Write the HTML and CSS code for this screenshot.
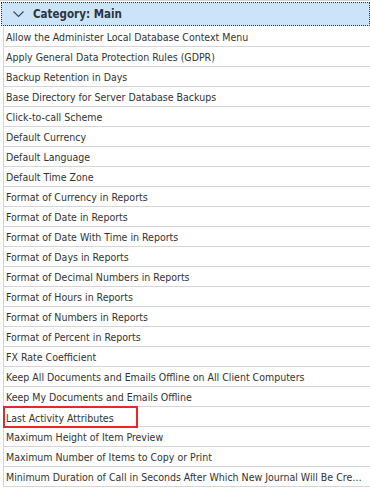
FILE: index.html
```html
<!DOCTYPE html>
<html>
<head>
<meta charset="utf-8">
<link rel="stylesheet" href="styles.css">
</head>
<body>
<div class="grid">
  <div class="cat">
    <div class="cat-inner">
      <svg class="chev" width="11" height="7" viewBox="0 0 11 7"><path d="M0.5 0.5 L5.5 5.5 L10.5 0.5" fill="none" stroke="#3b4a5a" stroke-width="1.2"/></svg>
      <span class="cat-label">Category: Main</span>
    </div>
  </div>
  <div class="rows">
    <div class="row">Allow the Administer Local Database Context Menu</div>
    <div class="row">Apply General Data Protection Rules (GDPR)</div>
    <div class="row">Backup Retention in Days</div>
    <div class="row">Base Directory for Server Database Backups</div>
    <div class="row">Click-to-call Scheme</div>
    <div class="row">Default Currency</div>
    <div class="row">Default Language</div>
    <div class="row">Default Time Zone</div>
    <div class="row">Format of Currency in Reports</div>
    <div class="row">Format of Date in Reports</div>
    <div class="row">Format of Date With Time in Reports</div>
    <div class="row">Format of Days in Reports</div>
    <div class="row">Format of Decimal Numbers in Reports</div>
    <div class="row">Format of Hours in Reports</div>
    <div class="row">Format of Numbers in Reports</div>
    <div class="row">Format of Percent in Reports</div>
    <div class="row">FX Rate Coefficient</div>
    <div class="row">Keep All Documents and Emails Offline on All Client Computers</div>
    <div class="row">Keep My Documents and Emails Offline</div>
    <div class="row highlight"><span class="mark">Last Activity Attributes</span></div>
    <div class="row">Maximum Height of Item Preview</div>
    <div class="row">Maximum Number of Items to Copy or Print</div>
    <div class="row">Minimum Duration of Call in Seconds After Which New Journal Will Be Created Automatically</div>
  </div>
</div>
</body>
</html>
```

FILE: styles.css
```css
html, body {
  margin: 0;
  padding: 0;
  background: #ffffff;
}
body {
  font-family: "DejaVu Sans Condensed", "DejaVu Sans", sans-serif;
  font-size: 10.5px;
  color: #333333;
  width: 370px;
  height: 490px;
  overflow: hidden;
}
.grid {
  display: flex;
  flex-direction: column;
}
.cat {
  height: 27px;
  box-sizing: border-box;
  border-top: 1px solid #d4d4d4;
  padding: 1px 0 1px 1px;
  background: #ffffff;
}
.cat-inner {
  height: 24px;
  box-sizing: border-box;
  background: #cce4f7;
  border: 1px dotted #333333;
  display: flex;
  align-items: center;
  padding-left: 11px;
  gap: 9px;
}
.chev {
  display: block;
}
.cat-label {
  font-weight: bold;
  color: #2b3440;
  font-size: 11.5px;
}
.rows {
  margin-left: 3px;
  border-left: 1px solid #d6d6d6;
}
.row {
  height: 20px;
  box-sizing: border-box;
  border-bottom: 1px solid #d6d6d6;
  padding: 1px 5px 0 2px;
  line-height: 18px;
  white-space: nowrap;
  overflow: hidden;
  text-overflow: ellipsis;
}
.highlight {
  overflow: visible;
  position: relative;
}
.mark {
  position: absolute;
  left: -1px;
  top: -1px;
  width: 135px;
  height: 22px;
  box-sizing: border-box;
  border: 2px solid #e8262b;
  padding-left: 1px;
  padding-top: 1px;
  line-height: 18px;
}
```
